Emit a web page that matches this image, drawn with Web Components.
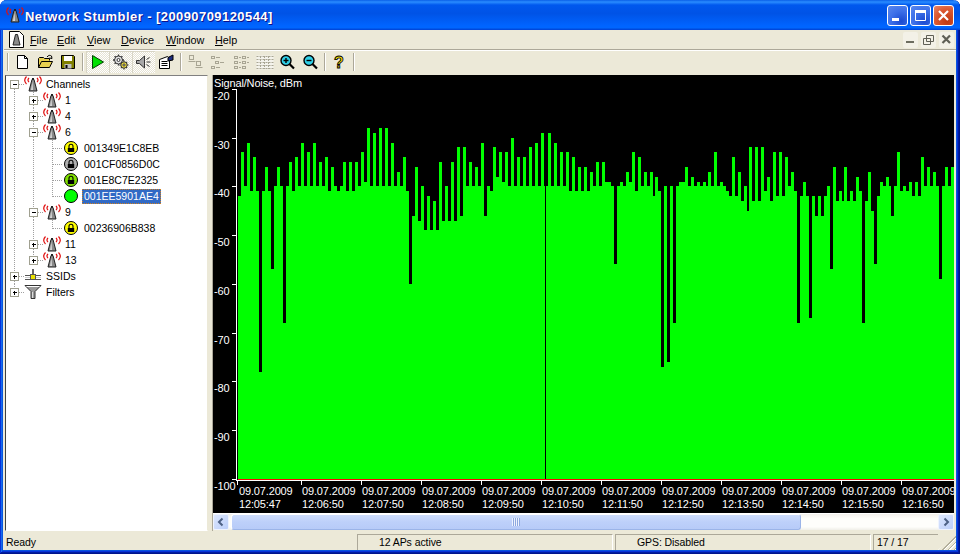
<!DOCTYPE html>
<html>
<head>
<meta charset="utf-8">
<title>Network Stumbler</title>
<style>
  html, body { margin: 0; padding: 0; background: #fff; overflow: hidden; }
  body { font: 10.5px "Liberation Sans", Arial, sans-serif; color: #000; }
</style>
</head>
<body>
<xp-window>
  <xp-titlebar slot="title">Network Stumbler - [20090709120544]</xp-titlebar>
  <xp-menubar slot="menu"></xp-menubar>
  <xp-toolbar slot="tools"></xp-toolbar>
  <net-tree slot="tree">
    <tree-row guides="m" icon="antenna">Channels</tree-row>
    <tree-row guides="|+" icon="antenna">1</tree-row>
    <tree-row guides="|+" icon="antenna">4</tree-row>
    <tree-row guides="|-" icon="antenna">6</tree-row>
    <tree-row guides="||T" icon="lock-yellow">001349E1C8EB</tree-row>
    <tree-row guides="||T" icon="lock-gray">001CF0856D0C</tree-row>
    <tree-row guides="||T" icon="lock-lime">001E8C7E2325</tree-row>
    <tree-row guides="||L" icon="open-green" selected>001EE5901AE4</tree-row>
    <tree-row guides="|-" icon="antenna">9</tree-row>
    <tree-row guides="||L" icon="lock-yellow">00236906B838</tree-row>
    <tree-row guides="|+" icon="antenna">11</tree-row>
    <tree-row guides="|P" icon="antenna">13</tree-row>
    <tree-row guides="+" icon="ssid">SSIDs</tree-row>
    <tree-row guides="P" icon="filter">Filters</tree-row>
  </net-tree>
  <net-chart slot="chart"></net-chart>
  <xp-scrollbar slot="scroll"></xp-scrollbar>
  <xp-statusbar slot="status"></xp-statusbar>
</xp-window>

<script>
// shared icon drawings, all on an 18x16 grid
const ANTENNA = `
  <path d="M2.500 0.500C0.300 2.800 0.300 5.700 2.500 8M5 1.800C3.700 3.200 3.700 4.800 5 6.200M15.500 0.500C17.700 2.800 17.700 5.700 15.500 8M13 1.800C14.300 3.200 14.300 4.800 13 6.200" fill="none" stroke="#e01010" stroke-width="1.200"/>
  <path d="M8 3.500h2l3 11.500H5z" fill="#8a8a8a" stroke="#222" stroke-width="1"/>
  <path d="M8.500 5.500l-1.500 8.500h2z" fill="#d8d8d8"/>
  <rect x="8" y="2" width="2" height="2" fill="#222"/>`;

function lockIcon(fill) {
  return `<circle cx="9" cy="8" r="6.500" fill="${fill}" stroke="#000"/>
    <path d="M7 8V6.200a2 2 0 0 1 4 0V8" fill="none" stroke="#000" stroke-width="1.100"/>
    <rect x="5.800" y="8" width="6.400" height="4" fill="#000"/>`;
}

const ICONS = {
  antenna: ANTENNA,
  "lock-yellow": lockIcon("#ffff00"),
  "lock-gray": lockIcon("#b0b0b0"),
  "lock-lime": lockIcon("#80e000"),
  "open-green": `<circle cx="9" cy="8" r="6.500" fill="#00ff00" stroke="#000"/>`,
  ssid: `
    <path d="M1 7.500h6M11 7.500h6M1 11.500h16" stroke="#555" stroke-width="1" fill="none"/>
    <path d="M1 9.500h16" stroke="#ccc" stroke-width="1"/>
    <path d="M8.500 1v5M9.500 1v5" stroke="#666" stroke-width="1"/>
    <rect x="6.500" y="6.500" width="5" height="5" fill="#e8e000" stroke="#555"/>`,
  filter: `
    <path d="M1 1.500h16l-6 6v7l-4 0v-7z" fill="#9a9a9a" stroke="#333"/>
    <path d="M2.500 2.500h13" stroke="#fff"/>
    <path d="M8.500 8v6" stroke="#ddd"/>`
};

const TOOL_ICONS = {
  "new": `<path d="M3.500 1.500h7l3 3v10h-10z" fill="#fff" stroke="#000"/><path d="M10.500 1.500v3h3" fill="none" stroke="#000"/>`,
  open: `<path d="M1.500 13.500v-9l1-1h4l1 1h5v2" fill="#e8d050" stroke="#000"/>
    <path d="M1.500 13.500l3-6h11l-3 6z" fill="#e8d050" stroke="#000"/>
    <path d="M10 3c1.500-2 3-2 4.500-1M14.500 2l.5 2.500-2.500-.5" fill="none" stroke="#000"/>`,
  save: `<path d="M1.500 1.500h12l1 1v12h-13z" fill="#808000" stroke="#000"/>
    <rect x="4" y="2" width="8" height="5" fill="#fff"/>
    <rect x="4.500" y="10" width="7" height="4.500" fill="#c0c0c0"/><rect x="5.500" y="11" width="2" height="3" fill="#000"/>`,
  play: `<path d="M3.500 1.500l11 6.500-11 6.500z" fill="#00e000" stroke="#004000"/>`,
  gears: `<g fill="none" stroke="#333">
      <circle cx="6.500" cy="6" r="4" fill="#e4e4e4"/><circle cx="6.500" cy="6" r="1.500" fill="#fff"/>
      <path d="M6.500 0.500v1.500M6.500 10v1.500M1 6h1.500M10.500 6h1.500M2.600 2.100l1 1M9.400 8.900l1 1M10.400 2.100l-1 1M2.600 9.900l1-1" stroke-width="1.300"/>
      <circle cx="12" cy="11" r="3.200" fill="#f0e040"/><circle cx="12" cy="11" r="1.100" fill="#fff"/>
      <path d="M12 6.500v1.300M12 14.200v1.300M7.500 11h1.300M15.200 11h1.300M8.900 7.900l.9.900M14.200 13.200l.9.900M15.100 7.900l-.9.900M8.900 14.100l.9-.900" stroke-width="1.200"/>
    </g>`,
  speaker: `<path d="M1.500 6.500h3l5-4.500v12l-5-4.500h-3z" fill="#a8a8a8" stroke="#333"/>
    <path d="M11.500 5.500l3-2M11.500 8h4M11.500 10.500l3 2" stroke="#333" fill="none"/>`,
  props: `<path d="M1.500 5.500l8-3 2 2v10h-10z" fill="#fff" stroke="#000"/>
    <path d="M3.500 7.500h6M3.500 9.500h6M3.500 11.500h6" stroke="#000"/>
    <path d="M10 3.500l5-2.500v5l-5 1z" fill="#1c2c80" stroke="#000"/>`,
  arrange: `<g fill="none" stroke="#a8a593"><rect x="2.500" y="1.500" width="4" height="4"/><path d="M1.500 7.500h7"/><rect x="9.500" y="7.500" width="4" height="4"/><path d="M8.500 13.500h7"/></g>`,
  tree1: `<g fill="none" stroke="#a8a593"><rect x="1.500" y="2.500" width="3" height="2"/><path d="M6 3.500h4"/><rect x="5.500" y="7.500" width="3" height="2"/><path d="M10 8.500h4"/><rect x="1.500" y="12.500" width="3" height="2"/><path d="M6 13.500h4"/></g>`,
  tree2: `<g fill="none" stroke="#a8a593"><rect x="1.500" y="2.500" width="3" height="2"/><path d="M6 3.500h2"/><rect x="9.500" y="2.500" width="3" height="2"/><path d="M14 3.500h2"/><rect x="1.500" y="7.500" width="3" height="2"/><path d="M6 8.500h2"/><rect x="9.500" y="7.500" width="3" height="2"/><path d="M14 8.500h2"/><rect x="1.500" y="12.500" width="3" height="2"/><path d="M6 13.500h2"/><rect x="9.500" y="12.500" width="3" height="2"/></g>`,
  grid: `<rect x="0.500" y="1.500" width="17" height="14" fill="#f4f3ec"/>
    <path d="M0.500 2.500h17M0.500 5.500h17M0.500 8.500h17M0.500 11.500h17M0.500 14.500h17M4.500 2v13M8.500 2v13M12.500 2v13" stroke="#a8a593" stroke-dasharray="2 1"/>`,
  zoomin: `<circle cx="7" cy="6.500" r="5" fill="#30d0e8" stroke="#000" stroke-width="1.400"/>
    <path d="M4.500 6.500h5M7 4v5" stroke="#000" stroke-width="1.400"/><path d="M10.500 10l4.500 4.500" stroke="#000" stroke-width="2.200"/>`,
  zoomout: `<circle cx="7" cy="6.500" r="5" fill="#30d0e8" stroke="#000" stroke-width="1.400"/>
    <path d="M4.500 6.500h5" stroke="#000" stroke-width="1.400"/><path d="M10.500 10l4.500 4.500" stroke="#000" stroke-width="2.200"/>`,
  help: `<text x="8" y="13.500" text-anchor="middle" font-family="Liberation Sans, sans-serif" font-weight="bold" font-size="16" fill="#ffe800" stroke="#000" stroke-width="0.900">?</text>`
};

class XpWindow extends HTMLElement {
  constructor() {
    super();
    this.attachShadow({ mode: "open" }).innerHTML = `
    <style>
      :host { display: block; width: 960px; height: 554px; }
      .frame {
        box-sizing: border-box; width: 960px; height: 554px; padding: 0 4px 4px;
        display: flex; flex-direction: column; background: #ece9d8;
        border-radius: 7px 7px 0 0;
        box-shadow: inset -1px -1px #00138c, inset 1px 0 #0831d9, inset -2px -2px #001ea0, inset 2px 0 #166aee, inset -3px -3px #0831d9, inset 3px 0 #0855dd, inset -4px -4px #0855dd;
        overflow: hidden;
      }
      .title { margin: 0 -4px; }
      .main { flex: 1; display: flex; min-height: 0; padding-left: 1px; margin-top: 1px; }
      .left { width: 203px; flex: none; display: flex; }
      .right { margin-left: 4px; width: 744px; flex: none; display: flex; flex-direction: column; border-left: 1px solid #aca899; box-sizing: border-box; }
      .right ::slotted(net-chart) { flex: none; }
    </style>
    <div class="frame">
      <div class="title"><slot name="title"></slot></div>
      <slot name="menu"></slot>
      <slot name="tools"></slot>
      <div class="main">
        <div class="left"><slot name="tree"></slot></div>
        <div class="right"><slot name="chart"></slot><slot name="scroll"></slot></div>
      </div>
      <slot name="status"></slot>
    </div>`;
  }
}

class XpTitlebar extends HTMLElement {
  constructor() {
    super();
    this.attachShadow({ mode: "open" }).innerHTML = `
    <style>
      :host { display: block; }
      .bar {
        height: 30px; box-sizing: border-box; padding: 0 6px; display: flex; align-items: center;
        background: linear-gradient(180deg, #0a5fe8 0, #2a8cff 2px, #0058ee 5px, #0053e6 45%, #0064ff 85%, #0066ff 92%, #0050e0 97%, #003dd7 100%);
      }
      svg.app { flex: none; width: 18px; height: 16px; margin-right: 1px; }
      .text { flex: 1; color: #fff; font: bold 13px "Liberation Sans", sans-serif; letter-spacing: 0.43px; text-shadow: 1px 1px #0f1089; white-space: nowrap; padding-top: 2px; }
      .btns { display: flex; gap: 2px; }
      .btn { width: 21px; height: 21px; box-sizing: border-box; border: 1px solid #fff; border-radius: 3px; background: radial-gradient(circle at 70% 80%, #1a49d0 0, #3c6fe8 50%, #5a88ef 100%); display: flex; align-items: center; justify-content: center; }
      .btn.close { background: radial-gradient(circle at 70% 80%, #c0380f 0, #dd5a33 60%, #e8886a 100%); }
    </style>
    <div class="bar">
      <svg class="app" viewBox="0 0 18 16">${ANTENNA}</svg>
      <span class="text"><slot></slot></span>
      <div class="btns">
        <div class="btn"><svg width="19" height="19" viewBox="0 0 19 19"><rect x="4" y="12" width="7" height="3" fill="#fff"/></svg></div>
        <div class="btn"><svg width="19" height="19" viewBox="0 0 19 19"><path d="M4.500 4.500h10v10h-10z" fill="none" stroke="#fff"/><rect x="4" y="4" width="11" height="3" fill="#fff"/></svg></div>
        <div class="btn close"><svg width="19" height="19" viewBox="0 0 19 19"><path d="M5 5l9 9M14 5l-9 9" stroke="#fff" stroke-width="2.200"/></svg></div>
      </div>
    </div>`;
  }
}

class XpMenubar extends HTMLElement {
  constructor() {
    super();
    const items = [["F", "ile", 27], ["E", "dit", 30], ["V", "iew", 34], ["D", "evice", 45], ["W", "indow", 49], ["H", "elp", 30]];
    this.attachShadow({ mode: "open" }).innerHTML = `
    <style>
      :host { display: block; }
      .bar { height: 19px; display: flex; align-items: center; padding-left: 5px; border-bottom: 1px solid #aca899; }
      svg.doc { flex: none; width: 15px; height: 17px; margin-right: 6px; }
      .item { flex: none; font-size: 10.8px; }
      .item u { text-underline-offset: 1px; }
      .mdi { margin-left: auto; display: flex; gap: 3px; padding-right: 2px; }
      .mdi div { width: 15px; height: 16px; display: flex; align-items: center; justify-content: center; background: #f3f1e7; border-radius: 2px; }
    </style>
    <div class="bar">
      <svg class="doc" viewBox="0 0 15 17">
        <path d="M0.500 0.500h10l4 4v12h-14z" fill="#fff" stroke="#000"/>
        <path d="M6.500 3.500h2l2.500 10.500h-7z" fill="#8a8a8a" stroke="#222"/>
      </svg>
      ${items.map(([k, rest, w]) => `<span class="item" style="width:${w}px"><u>${k}</u>${rest}</span>`).join("")}
      <div class="mdi">
        <div><svg width="13" height="13" viewBox="0 0 13 13"><rect x="2" y="8" width="8" height="2" fill="#6d6d60"/></svg></div>
        <div><svg width="13" height="13" viewBox="0 0 13 13"><path d="M4.500 2.500h7v6h-7zM1.500 5.500h7v6h-7z" fill="#f3f1e7" stroke="#5f5f55"/></svg></div>
        <div><svg width="13" height="13" viewBox="0 0 13 13"><path d="M2.500 2.500l7.500 7.500M10 2.500l-7.500 7.500" stroke="#5f5f55" stroke-width="2.200"/></svg></div>
      </div>
    </div>`;
  }
}

class XpToolbar extends HTMLElement {
  constructor() {
    super();
    const groups = [
      [["new"], ["open"], ["save"]],
      [["play", 1], ["gears", 1], ["speaker", 1], ["props"]],
      [["arrange"], ["tree1"], ["tree2"], ["grid"], ["zoomin"], ["zoomout"]],
      [["help"]]
    ];
    const btn = ([name, down]) => `<div class="btn ${down ? "down" : ""}"><svg width="18" height="16" viewBox="0 0 18 16">${TOOL_ICONS[name]}</svg></div>`;
    this.attachShadow({ mode: "open" }).innerHTML = `
    <style>
      :host { display: block; }
      .bar { height: 24px; box-sizing: border-box; padding: 0 0 1px 1px; display: flex; align-items: center; border-top: 1px solid #fff; }
      .sep { width: 1px; height: 18px; background: #aca899; border-right: 1px solid #fff; margin: 0 2px; flex: none; }
      .btn { width: 23px; height: 22px; flex: none; display: flex; align-items: center; justify-content: center; box-sizing: border-box; }
      .btn.down { background: repeating-conic-gradient(#fff 0 25%, #e6e3d3 0 50%) 0 0 / 2px 2px; box-shadow: inset 1px 1px #d8d5c5; }
      svg { display: block; }
    </style>
    <div class="bar"><div class="sep"></div>${groups.map(g => g.map(btn).join("")).join('<div class="sep"></div>')}<div class="sep"></div></div>`;
  }
}

class NetTree extends HTMLElement {
  constructor() {
    super();
    this.attachShadow({ mode: "open" }).innerHTML = `
    <style>
      :host { display: block; width: 203px; box-sizing: border-box; background: #fff; border-left: 1px solid #404040; border-top: 1px solid #808080; border-right: 1px solid #ece9d8; border-bottom: 1px solid #fff; overflow: hidden; }
    </style>
    <slot></slot>`;
  }
}

class TreeRow extends HTMLElement {
  connectedCallback() {
    const guides = this.getAttribute("guides") || "";
    const icon = ICONS[this.getAttribute("icon")] || "";
    const cells = [...guides].map(g => `<svg width="19" height="16" viewBox="0 0 19 16">${this.cell(g)}</svg>`).join("");
    this.attachShadow({ mode: "open" }).innerHTML = `
    <style>
      :host { display: block; height: 16px; }
      .row { display: flex; align-items: center; height: 16px; }
      svg { display: block; flex: none; }
      .icon { margin-right: 2px; }
      .label { height: 15px; line-height: 15px; padding: 0 2px; font-size: 10.5px; white-space: nowrap; box-sizing: border-box; }
      :host([selected]) .label { background: #316ac5; color: #fff; outline: 1px dotted #d08020; outline-offset: -1px; }
    </style>
    <div class="row" style="margin-left:-1px">${cells}<svg class="icon" width="18" height="16" viewBox="0 0 18 16">${icon}</svg><span class="label"><slot></slot></span></div>`;
  }
  cell(g) {
    const dot = 'stroke="#a0a0a0" stroke-dasharray="1 1" fill="none" shape-rendering="crispEdges"';
    const box = (minus, up, down) => `
      ${up ? `<path d="M9.500 0v4" ${dot}/>` : ""}
      ${down ? `<path d="M9.500 13v3" ${dot}/>` : ""}
      <path d="M14 8.500h5" ${dot}/>
      <rect x="5.500" y="4.500" width="8" height="8" fill="#fff" stroke="#a0a090" shape-rendering="crispEdges"/>
      <path d="M7.500 8.500h4${minus ? "" : "M9.500 6.500v4"}" stroke="#000" shape-rendering="crispEdges"/>`;
    switch (g) {
      case "|": return `<path d="M9.500 0v16" ${dot}/>`;
      case "T": return `<path d="M9.500 0v16M10 8.500h9" ${dot}/>`;
      case "L": return `<path d="M9.500 0v9M10 8.500h9" ${dot}/>`;
      case "+": return box(false, true, true);
      case "-": return box(true, true, true);
      case "m": return box(true, false, true);
      case "P": return box(false, true, false);
    }
    return "";
  }
}

// column tops in screen y, one 3px wide sample each; "y:w" when the sample has another width
const COLUMNS = `
196 152 186 143 191 157 191 372 191 167 191 269 186 167 186 323 186 162 191 157 186 143 186 152 186 143 186 162 186 157
191 167 186 191 186 162 191 162 191 162 186 152 182 128 186 133 186 128 186 128 186 143 186 172 186 157 191 284 216 167
221 186 230 196 230 201 230 162 221 186 221 162 221 147
216 147 186 162 186 167 186 143 216 186 191 147 177 152 182 152 186 138 186 157 186 157 186 147 186 143 186 133 186:4
133 186 143 186 152 186 152 191 157 191 167 191 167 191 172 186 162 186 162 182 182 186 264 186 182 186 172 182 152 191
157 186 172 186 172 196:2 177 191 367 186 362 186 323 186 182 182 167 186 177 186 182 186 182 186:2 172
186 152 186 182 186 191 196 157 196 172 201 186 211:2
147 201 147 201 147 191 177 201 152 196 152 196 157 186 172 191
323 196 182 196 318 196 216 196 216 196 186 269
167 201 191 201:2 167 201 191 201 177 191 323 201 172 211 264 196 182 186 177 186:2 216
186 152 191 186 191 182 196 182 196 157 186 167 186 172 186 279 186 167 186 167`;

const Y_LABELS = [[-20, 89], [-30, 138], [-40, 186], [-50, 235], [-60, 284], [-70, 333], [-80, 381], [-90, 430], [-100, 479]];
const TIMES = ["12:05:47", "12:06:50", "12:07:50", "12:08:50", "12:09:50", "12:10:50", "12:11:50", "12:12:50", "12:13:50", "12:14:50", "12:15:50", "12:16:50"];

class NetChart extends HTMLElement {
  connectedCallback() {
    // screen to chart coordinates: the chart's box starts at x=213, y=75
    const ox = 213, oy = 75, floor = 479 - oy;
    let x = 238 - ox, green = "";
    for (const c of COLUMNS.trim().split(/\s+/)) {
      const [top, w = 3] = c.split(":").map(Number);
      green += `M${x} ${top - oy}h${w}V${floor}h${-w}z`;
      x += w;
    }
    const ticks = Y_LABELS.map(([v, y]) => `
      <path d="M${232 - ox} ${y - oy + 0.5}h4" stroke="#fff"/>
      <text x="1" y="${y - oy + 11}">${v}</text>`).join("");
    const times = TIMES.map((t, i) => {
      const lx = i === 0 ? 239 : 302 + (i - 1) * 60;
      const tx = i === 0 ? 237 : 301 + (i - 1) * 60;
      return `<path d="M${tx - ox + 0.5} ${481 - oy}v4" stroke="#fff"/>
        <text x="${lx - ox}" y="${495 - oy}">09.07.2009</text>
        <text x="${lx - ox}" y="${508 - oy}">${t}</text>`;
    }).join("");
    this.attachShadow({ mode: "open" }).innerHTML = `
    <style>
      :host { display: block; width: 741px; height: 438px; background: #000; overflow: hidden; margin-right: 2px; }
      svg { display: block; shape-rendering: crispEdges; }
      text { fill: #fff; font: 11px "Liberation Sans", sans-serif; letter-spacing: -0.15px; }
    </style>
    <svg width="741" height="438" viewBox="0 0 741 438">
      <path d="${green}" fill="#00ff00"/>
      <path d="M${545 - ox + 0.5} ${186 - oy}V${floor}" stroke="#000"/>
      <path d="M${238 - ox} ${floor + 0.5}H741" stroke="#ff0000"/>
      <path d="M${236 - ox + 0.5} ${89 - oy}V${481 - oy}M${236 - ox} ${480 - oy + 0.5}H741" stroke="#fff"/>
      <text x="1" y="12">Signal/Noise, dBm</text>
      ${ticks}
      ${times}
    </svg>`;
  }
}

class XpScrollbar extends HTMLElement {
  constructor() {
    super();
    this.attachShadow({ mode: "open" }).innerHTML = `
    <style>
      :host { display: block; width: 741px; height: 18px; box-sizing: border-box; border-top: 1px solid #fff; }
      .bar { display: flex; height: 16px; background: linear-gradient(180deg, #f3f1ec, #fefefb 30%, #fefefb 80%, #f0efe8); }
      .arrow { width: 16px; flex: none; box-sizing: border-box; border: 1px solid #eef3ff; border-radius: 2px; background: linear-gradient(135deg, #dbe6fd, #bccffa); display: flex; align-items: center; justify-content: center; }
      .thumb { width: 570px; flex: none; margin-left: 2px; box-sizing: border-box; border: 1px solid #fff; border-right-color: #9bb4e8; border-bottom-color: #9bb4e8; border-radius: 3px; background: linear-gradient(180deg, #cddcfb, #bdd0fa 50%, #b7cbf8); display: flex; align-items: center; justify-content: center; }
      .grip { width: 8px; height: 8px; background: repeating-linear-gradient(90deg, #eef3fe 0 1px, #8da8e0 1px 2px); }
      .track { flex: 1; }
      svg { display: block; }
    </style>
    <div class="bar">
      <div class="arrow"><svg width="10" height="10" viewBox="0 0 10 10"><path d="M6.500 1.500l-3.500 3.500 3.500 3.500" fill="none" stroke="#4d6185" stroke-width="2"/></svg></div>
      <div class="thumb"><div class="grip"></div></div>
      <div class="track"></div>
      <div class="arrow"><svg width="10" height="10" viewBox="0 0 10 10"><path d="M3.500 1.500l3.500 3.500-3.500 3.500" fill="none" stroke="#4d6185" stroke-width="2"/></svg></div>
    </div>`;
  }
}

class XpStatusbar extends HTMLElement {
  constructor() {
    super();
    this.attachShadow({ mode: "open" }).innerHTML = `
    <style>
      :host { display: block; }
      .bar { height: 19px; display: flex; font-size: 10.5px; letter-spacing: -0.08px; box-sizing: border-box; }
      .pane { box-sizing: border-box; height: 16px; margin-top: 3px; line-height: 16px; white-space: nowrap; flex: none; }
      .inset { border-top: 1px solid #aca899; border-left: 1px solid #aca899; border-right: 1px solid #fff; margin-right: 2px; line-height: 15px; }
      .ready { width: 353px; padding-left: 2px; }
      .aps { width: 256px; padding-left: 21px; }
      .gps { width: 256px; padding-left: 21px; }
      .count { width: 65px; padding-left: 3px; margin-right: 0; border-right: 0; }
      .grip { flex: 1; margin-top: 3px; background: repeating-linear-gradient(135deg, transparent 0 2px, #b4b09c 2px 3px, #fff 3px 4px); clip-path: polygon(100% 0, 100% 100%, 0 100%); }
    </style>
    <div class="bar">
      <div class="pane ready">Ready</div>
      <div class="pane inset aps">12 APs active</div>
      <div class="pane inset gps">GPS: Disabled</div>
      <div class="pane inset count">17 / 17</div>
      <div class="grip"></div>
    </div>`;
  }
}

customElements.define("xp-window", XpWindow);
customElements.define("xp-titlebar", XpTitlebar);
customElements.define("xp-menubar", XpMenubar);
customElements.define("xp-toolbar", XpToolbar);
customElements.define("net-tree", NetTree);
customElements.define("tree-row", TreeRow);
customElements.define("net-chart", NetChart);
customElements.define("xp-scrollbar", XpScrollbar);
customElements.define("xp-statusbar", XpStatusbar);
</script>
</body>
</html>
